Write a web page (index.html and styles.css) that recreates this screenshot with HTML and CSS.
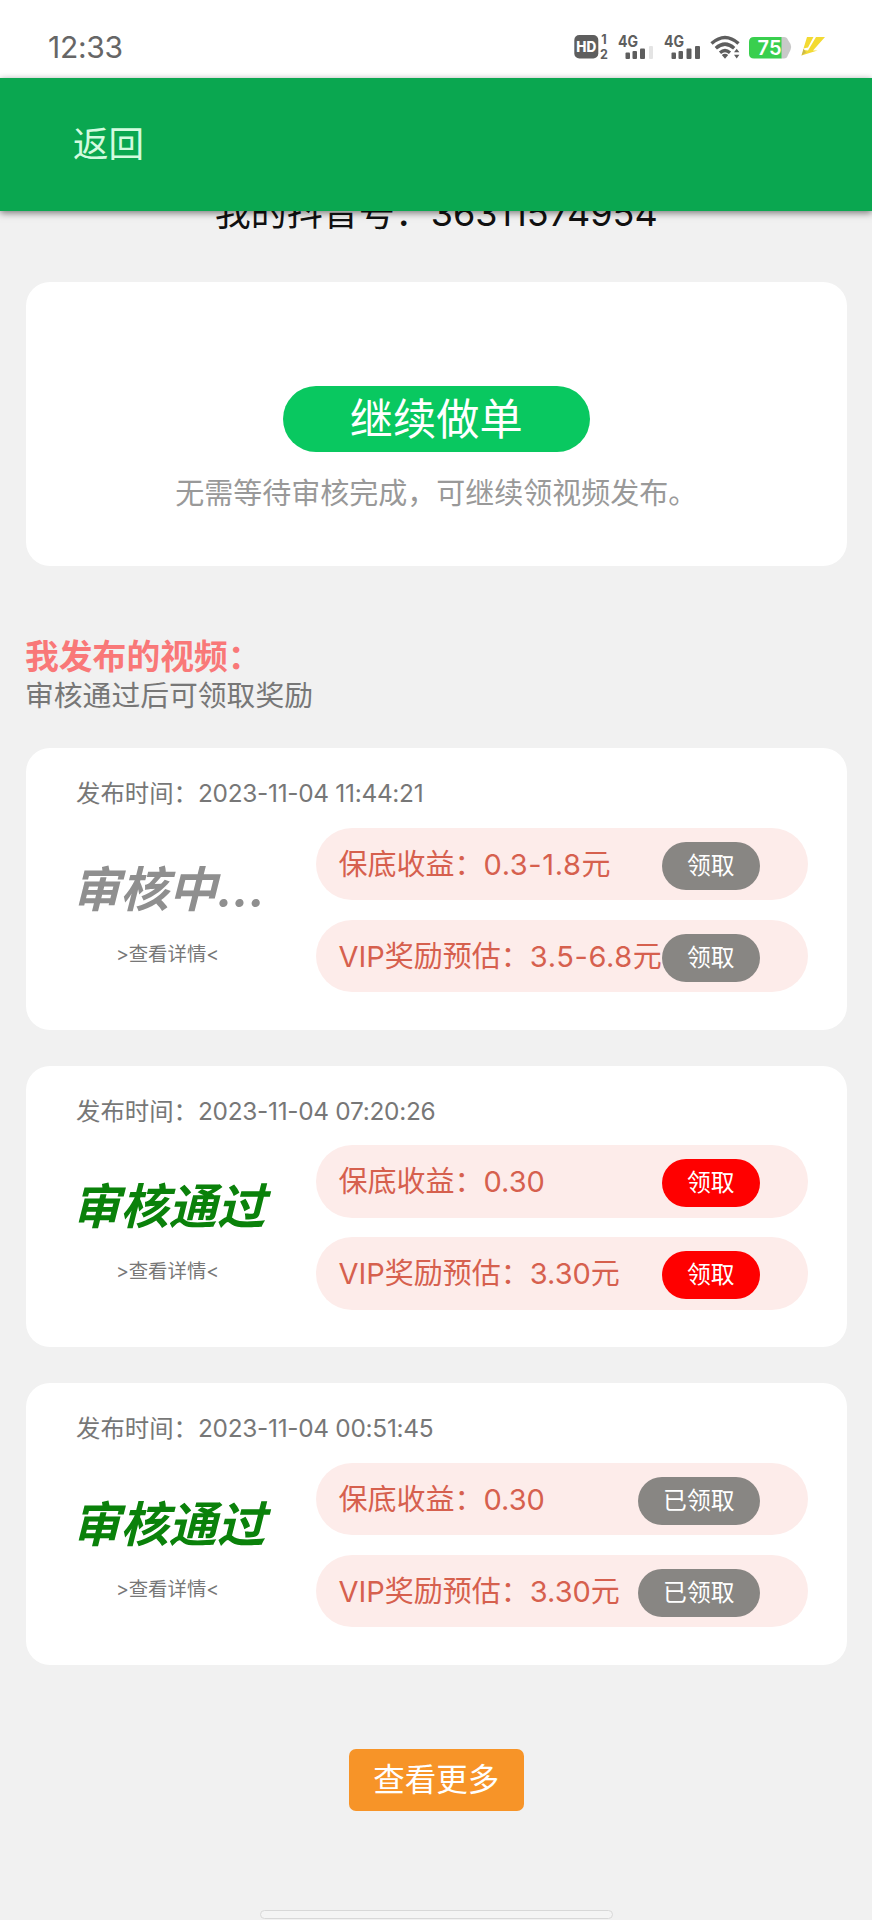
FILE: index.html
```html
<!DOCTYPE html>
<html lang="zh-CN">
<head>
<meta charset="utf-8">
<title>我发布的视频</title>
<link rel="stylesheet" href="styles.css">
</head>
<body>
<div class="statusbar">
  <span class="clock">12:33</span>
  <div class="indicators">
    <svg class="ic-hd" width="38" height="30" viewBox="0 0 38 30">
      <rect x="0.3" y="3" width="24" height="23.5" rx="5" fill="#5e5e5e"/>
      <text x="12.3" y="19.8" text-anchor="middle" class="t-hd" textLength="20" lengthAdjust="spacingAndGlyphs">HD</text>
      <text x="30" y="12.300" text-anchor="middle" class="t-sim">1</text>
      <text x="30" y="26.500" text-anchor="middle" class="t-sim">2</text>
    </svg>
    <svg class="ic-net" width="38" height="30" viewBox="0 0 38 30">
      <text x="0" y="14.5" class="t-net" textLength="20" lengthAdjust="spacingAndGlyphs">4G</text>
      <g fill="#5e5e5e"><rect x="7.5" y="20.500" width="4.500" height="6.500" rx="1"/><rect x="14.5" y="19" width="4.500" height="8" rx="1"/><rect x="22" y="16.5" width="5" height="10.5" rx="1"/></g>
      <rect x="31" y="14" width="4" height="13" rx="1" fill="#e4e4e4"/>
    </svg>
    <svg class="ic-net2" width="38" height="30" viewBox="0 0 38 30">
      <text x="0" y="14.5" class="t-net" textLength="20" lengthAdjust="spacingAndGlyphs">4G</text>
      <g fill="#5e5e5e"><rect x="7.5" y="20.500" width="4.500" height="6.500" rx="1"/><rect x="14.5" y="19" width="4.500" height="8" rx="1"/><rect x="22.5" y="16.5" width="5" height="10.5" rx="1"/><rect x="31" y="14" width="5" height="13" rx="1"/></g>
    </svg>
    <svg class="ic-wifi" width="31" height="30" viewBox="0 0 31 30">
      <g fill="none" stroke="#5e5e5e" stroke-width="3.4"><path d="M1.5 11.5Q15 -0.5 28.5 11.5"/><path d="M5.8 16.3Q15 8 24.2 16.3"/><path d="M10 20.7Q15 16.5 20 20.7"/></g>
      <path d="M11.8 23Q15 20.6 18.2 23L15 26.8ZM24 20.2l2.7-3.4 2.7 3.4ZM24 22.8h5.4l-2.7 3.6Z" fill="#5e5e5e"/>
    </svg>
    <svg class="ic-bat" width="43" height="30" viewBox="0 0 43 30">
      <path d="M32 5h3q3 0 4 3l2.5 4q1.4 3 0 6L39 23q-1 3.500-4 3.500h-3Z" fill="#c9c9c9"/>
      <path d="M5 5h27.500v21.500H5q-5 0-5-5V10q0-5 5-5Z" fill="#39cf4e"/>
      <text x="20.500" y="22.800" text-anchor="middle" class="t-bat">75</text>
    </svg>
    <svg class="ic-bolt" width="24" height="30" viewBox="0 0 24 30">
      <path d="M6 5h6.500L7 15.500l-4.500 1ZM15 5h9L12 18.500h4.500L0.500 23.500 3 18l4 .5Z" fill="#f3da33"/>
      <path d="M0.500 23.500 2.500 16.500l2.500 4Z" fill="#cdbb4a"/>
    </svg>
  </div>
</div>
<header class="topbar"><a class="back">返回</a></header>
<main class="content">
  <p class="account">我的抖音号：<span class="num">36311574954</span></p>
  <section class="card cta">
    <button class="continue">继续做单</button>
    <p class="hint">无需等待审核完成，可继续领视频发布。</p>
  </section>
  <h2 class="heading">我发布的视频：</h2>
  <p class="sub">审核通过后可领取奖励</p>

  <article class="card video">
    <p class="time">发布时间：<span class="num">2023-11-04 11:44:21</span></p>
    <div class="row">
      <div class="state"><strong class="label pending">审核中<span class="dots">...</span></strong><a class="detail">&gt;查看详情&lt;</a></div>
      <div class="rewards">
        <div class="reward"><span>保底收益：<span class="range">0.3-1.8</span>元</span><button class="claim off">领取</button></div>
        <div class="reward"><span>VIP奖励预估：<span class="range">3.5-6.8</span>元</span><button class="claim off">领取</button></div>
      </div>
    </div>
  </article>

  <article class="card video">
    <p class="time">发布时间：<span class="num">2023-11-04 07:20:26</span></p>
    <div class="row">
      <div class="state"><strong class="label passed">审核通过</strong><a class="detail">&gt;查看详情&lt;</a></div>
      <div class="rewards">
        <div class="reward"><span>保底收益：0.30</span><button class="claim">领取</button></div>
        <div class="reward"><span>VIP奖励预估：3.30元</span><button class="claim">领取</button></div>
      </div>
    </div>
  </article>

  <article class="card video">
    <p class="time">发布时间：<span class="num">2023-11-04 00:51:45</span></p>
    <div class="row">
      <div class="state"><strong class="label passed">审核通过</strong><a class="detail">&gt;查看详情&lt;</a></div>
      <div class="rewards">
        <div class="reward"><span>保底收益：0.30</span><button class="claim off">已领取</button></div>
        <div class="reward"><span>VIP奖励预估：3.30元</span><button class="claim off">已领取</button></div>
      </div>
    </div>
  </article>

  <button class="more">查看更多</button>
  <div class="home-indicator"></div>
</main>
</body>
</html>
```

FILE: styles.css
```css
* { box-sizing: border-box; margin: 0; padding: 0; }
body {
  width: 872px; height: 1920px; overflow: hidden;
  display: flex; flex-direction: column;
  background: #f1f1f1;
  font-family: Inter, "Noto Sans CJK SC", sans-serif;
}
button { border: 0; font-family: inherit; color: #fff; white-space: nowrap; display: block; }

.statusbar {
  height: 78px; flex: none; background: #fff;
  display: flex; justify-content: space-between;
  padding: 30px 47px 0 48px;
}
.clock { font-size: 30px; line-height: 35px; color: #666; letter-spacing: -0.3px; }
.indicators { display: flex; align-items: flex-start; padding-top: 2px; }
.indicators svg { display: block; flex: none; overflow: visible; }
.ic-hd { margin-right: 6px; }
.ic-net, .ic-net2 { margin-right: 8px; }
.ic-bat { margin: 0 9px 0 8px; }
.t-hd { font: 800 14px Inter; fill: #fff; }
.t-sim { font: 700 12.5px Inter; fill: #5e5e5e; }
.t-net { font: 700 15.500px Inter; fill: #5e5e5e; }
.t-bat { font: 600 20px Inter; fill: #fff; }

.topbar {
  height: 133px; flex: none; position: relative; z-index: 1;
  background: #0aa750; box-shadow: 0 2px 7px rgba(0, 0, 0, .5);
  display: flex; align-items: center; padding-left: 73px;
}
.back { font-size: 35.500px; line-height: 40px; color: #d3fbdf; }

.content {
  flex: 1; display: flex; flex-direction: column;
  padding: 0 25.500px 1px 26px; margin-top: -20px;
}
.account { font-size: 36px; line-height: 44px; height: 44px; text-align: center; color: #111; white-space: nowrap; }

.card { background: #fff; border-radius: 24px; flex: none; }
.cta {
  margin-top: 47px; height: 284px; padding-top: 104px;
  display: flex; flex-direction: column; align-items: center;
}
.continue {
  width: 307px; height: 66px; border-radius: 33px; background: #09c860;
  font-size: 43.200px; line-height: 64px;
}
.hint { margin-top: 20px; font-size: 29px; line-height: 44px; color: #999; white-space: nowrap; }

.heading { margin-top: 71px; margin-left: -1px; font-size: 33.800px; line-height: 40px; color: #f97878; }
.sub { margin-left: -1px; font-size: 28.800px; line-height: 38px; color: #777; margin-bottom: 33px; }

.video { height: 281.500px; margin-bottom: 36.200px; padding: 27px 39px 0 50px; }
.time { font-size: 24.400px; line-height: 36px; color: #777; white-space: nowrap; }
.time .num { letter-spacing: -0.28px; }
.row { display: flex; justify-content: space-between; margin-top: 16.500px; }
.state { width: 183px; display: flex; flex-direction: column; align-items: center; padding-top: 35px; }
.label { align-self: flex-start; margin-left: -4px; font-size: 48.300px; line-height: 54px; font-style: italic; white-space: nowrap; }
.pending { color: #8f8f8f; }
.passed { color: #0a810a; }
.detail { margin-top: 21px; font-size: 19.400px; line-height: 32px; color: #777; white-space: nowrap; }
.rewards { width: 492px; display: grid; gap: 19.500px; }
.reward {
  height: 72.500px; border-radius: 36.250px; background: #fdecea;
  display: flex; align-items: center; justify-content: space-between;
  padding: 2px 48px 0 23px;
  font-size: 29px; line-height: 40px; color: #d6604e; white-space: nowrap;
}
.range { letter-spacing: 0.600px; }
.claim {
  height: 48px; border-radius: 24px; padding: 0 25px; flex: none; margin-top: 2px;
  background: #f00; font-size: 23.800px; line-height: 46px;
}
.claim.off { background: #888683; }

.more {
  align-self: center; flex: none; margin-top: 48px;
  width: 175px; height: 62px; border-radius: 7px;
  background: #f79428; font-size: 31.500px; line-height: 60px;
}
.home-indicator {
  width: 353px; height: 9px; margin: auto auto 0; flex: none;
  border: 1px solid #d8d8d8; border-radius: 5px; background: #f4f4f4;
}
```
